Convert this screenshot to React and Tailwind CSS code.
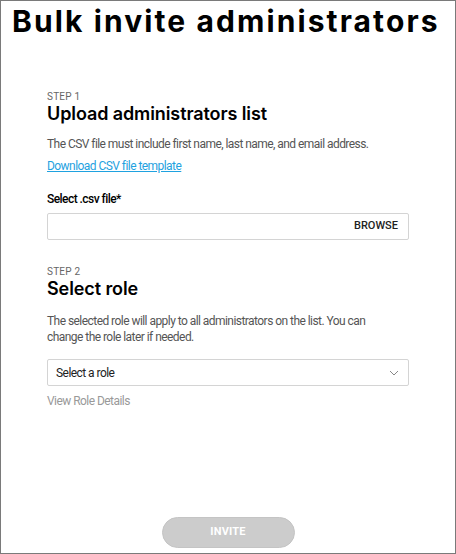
import React from 'react';

const body = { fontFamily: 'Roboto, "Noto Sans", sans-serif' };
const head = { fontFamily: 'Inter, "Noto Sans", sans-serif' };

const App = () => {
    return (
        <div className="w-[456px] h-[554px] border border-[#7a7a7a] bg-white flex flex-col" style={body}>
            <h1 className="pl-[11px] pt-[2px] text-[30px] leading-[36px] font-bold text-black tracking-[2.1px]" style={head}>
                Bulk invite administrators
            </h1>

            <div className="px-[46px] pt-[51px] flex flex-col tracking-[-0.55px]">
                <span className="text-[10px] leading-[14px] text-[#666] tracking-[0.2px]">STEP 1</span>
                <h2 className="text-[18px] leading-[20px] font-semibold text-black tracking-[-0.1px]" style={head}>
                    Upload administrators list
                </h2>

                <p className="text-[12px] leading-[17px] text-[#555] mt-[12px]">
                    The CSV file must include first name, last name, and email address.
                </p>
                <a href="#" className="text-[12px] leading-[17px] text-[#1fa2e0] underline mt-[5px] w-fit">
                    Download CSV file template
                </a>

                <label className="text-[12px] leading-[17px] font-medium text-black mt-[16px]">Select .csv file*</label>
                <div className="mt-[5px] h-[27px] border border-[#d4d4d4] rounded-[2px] flex items-center justify-end pr-[10px]">
                    <span className="text-[11px] font-medium text-[#222] tracking-[0px]">BROWSE</span>
                </div>

                <span className="text-[10px] leading-[14px] text-[#666] tracking-[0.2px] mt-[25px]">STEP 2</span>
                <h2 className="text-[18px] leading-[20px] font-semibold text-black tracking-[-0.1px]" style={head}>
                    Select role
                </h2>

                <p className="text-[12px] leading-[16px] text-[#555] mt-[14px] max-w-[330px]">
                    The selected role will apply to all administrators on the list. You can change the role later if needed.
                </p>

                <div className="mt-[14px] h-[27px] border border-[#d4d4d4] rounded-[2px] flex items-center justify-between pl-[8px] pr-[9px]">
                    <span className="text-[12px] text-[#222]">Select a role</span>
                    <svg width="10" height="6" viewBox="0 0 10 6" fill="none">
                        <path d="M1 1l4 4 4-4" stroke="#888" strokeWidth="1" />
                    </svg>
                </div>

                <span className="text-[12px] leading-[17px] text-[#999] mt-[7px]">View Role Details</span>
            </div>

            <div className="mt-auto pb-[5px] flex justify-center">
                <button className="w-[133px] h-[31px] rounded-full bg-[#cccccc] border border-[#c4c4c4] text-white text-[11px] font-bold tracking-[0.2px]">
                    INVITE
                </button>
            </div>
        </div>
    );
};

export default App;
